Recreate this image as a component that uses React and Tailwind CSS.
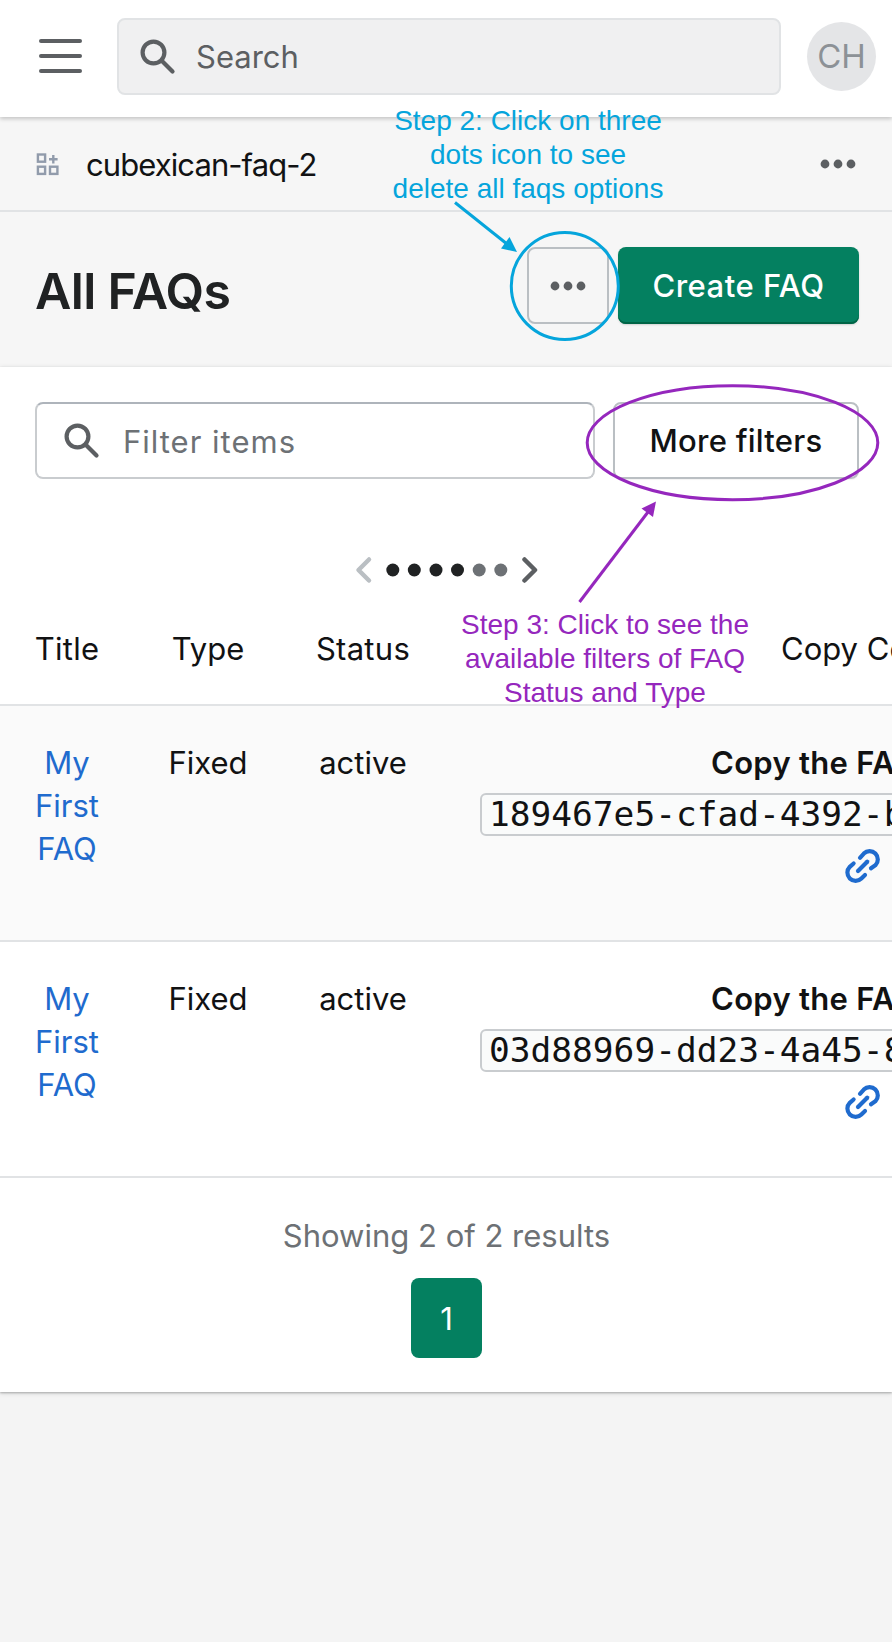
import React from "react";

function SearchIcon({ className }) {
  return (
    <svg width="36" height="36" viewBox="0 0 36 36" fill="none" stroke="#5c5f62" strokeWidth="4.2" className={className}>
      <circle cx="13.5" cy="13.5" r="10.9" />
      <path d="M21.5 21.5 32.5 32.5" strokeLinecap="round" />
    </svg>
  );
}

function Dots() {
  return (
    <svg width="36" height="10" viewBox="0 0 36 10" fill="#5c5f62">
      <circle cx="5" cy="5" r="4.4" />
      <circle cx="18" cy="5" r="4.4" />
      <circle cx="31" cy="5" r="4.4" />
    </svg>
  );
}

function LinkIcon() {
  return (
    <svg width="36" height="36" viewBox="0 0 36 36" fill="none" stroke="#1f6bce" strokeWidth="4.2" strokeLinecap="round">
      <path d="M15 9.800 18.800 5.600a8.200 8.200 0 0 1 11.600 11.600L26 20.300" />
      <path d="M8.600 15.500 4.800 18.800a8.200 8.200 0 0 0 11.600 11.600L20 27" />
      <path d="M13 23 22.200 13.800" />
    </svg>
  );
}

function AppGridIcon() {
  return (
    <svg width="24" height="24" viewBox="0 0 24 24" fill="none" stroke="#919bab" strokeWidth="2.4">
      <rect x="1.900" y="2.500" width="7.200" height="7.200" />
      <rect x="1.900" y="14.700" width="7.200" height="7.200" />
      <rect x="14" y="14.700" width="7.400" height="7.200" />
      <path d="M17.300 3v8.600M13 7.300h8.600" />
    </svg>
  );
}

const rows = [
  { code: "189467e5-cfad-4392-b", shade: "bg-[#fafafa]" },
  { code: "03d88969-dd23-4a45-8", shade: "bg-white" },
];

function Row({ code, shade }) {
  return (
    <div className={`grid h-[236px] grid-cols-[134px_148px_162px_1fr] border-b-2 border-[#e1e3e5] pt-[35px] text-center text-[31px] leading-[43px] ${shade}`}>
      <a className="px-[30px] text-[#1f6bce]">My First FAQ</a>
      <div>Fixed</div>
      <div>active</div>
      <div className="overflow-hidden text-left whitespace-nowrap">
        <div className="pl-[267px] font-semibold tracking-[0.3px]">Copy the FAQ</div>
        <div className="mt-[9px] ml-[36px] h-[43px] w-[460px] rounded-md border-2 border-[#c9cccf] bg-[#fafbfb] pl-[7px] font-['DejaVu_Sans_Mono',monospace] text-[34.500px] leading-[38px]">
          {code}
        </div>
        <div className="mt-[12px] ml-[401px]"><LinkIcon /></div>
      </div>
    </div>
  );
}

export default function App() {
  return (
    <div className="relative flex h-[1642px] w-[892px] flex-col overflow-hidden bg-[#f4f4f4] font-[Inter,sans-serif] text-[#111213]">
      <header className="z-10 flex h-[117px] shrink-0 items-start bg-white pt-[18px] shadow-[0_2px_4px_rgba(0,0,0,0.2)]">
        <div className="mt-[21px] ml-[39px] flex w-[43px] flex-col gap-[11px]">
          <span className="h-[4px] rounded-full bg-[#5c5f62]" />
          <span className="h-[4px] rounded-full bg-[#5c5f62]" />
          <span className="h-[4px] rounded-full bg-[#5c5f62]" />
        </div>
        <div className="ml-[35px] flex h-[77px] w-[664px] items-center rounded-lg border-2 border-[#e1e3e5] bg-[#f0f0f1] pl-[21px] text-[31px] text-[#5c5f62]">
          <SearchIcon />
          <span className="mt-[2px] ml-[20px]">Search</span>
        </div>
        <div className="mt-[4px] ml-[26px] flex size-[69px] items-center justify-center rounded-full bg-[#e4e5e7] pt-px text-[33px] text-[#8c9196]">CH</div>
      </header>

      <div className="flex h-[95px] shrink-0 items-center border-b-2 border-[#e1e3e5] bg-[#f6f6f6] pr-[36px] pl-[36px] text-[31px]">
        <AppGridIcon />
        <span className="mt-[3px] ml-[26px] tracking-[-0.92px]">cubexican-faq-2</span>
        <span className="ml-auto"><Dots /></span>
      </div>

      <div className="flex h-[155px] shrink-0 items-start bg-[#f6f6f6] pt-[35px] pr-[33px] pl-[35px]">
        <h1 className="mt-[12px] text-[50px] leading-[64px] font-semibold tracking-[-0.65px] text-[#202223]">All FAQs</h1>
        <div className="ml-auto flex gap-[9px]">
          <button className="flex h-[77px] w-[82px] items-center justify-center rounded-lg border-2 border-[#babfc3]"><Dots /></button>
          <button className="h-[77px] w-[241px] rounded-lg bg-[#048060] pt-[2px] text-[31px] font-medium tracking-[0.5px] text-white shadow-[inset_0_-2px_0_#006446,0_1px_2px_rgba(0,0,0,0.15)]">Create FAQ</button>
        </div>
      </div>

      <main className="flex h-[1025px] shrink-0 flex-col bg-white shadow-[0_1px_5px_rgba(23,24,24,0.15),0_1px_2px_rgba(0,0,0,0.25)]">
        <div className="flex gap-[18px] pt-[35px] pr-[33px] pl-[35px]">
          <div className="flex h-[77px] w-[560px] items-center rounded-lg border-2 border-[#c9cccf] border-t-[#aeb4bb] pl-[27px] text-[31px] text-[#6d7175]">
            <SearchIcon />
            <span className="mt-[3px] ml-[23px] tracking-[1px]">Filter items</span>
          </div>
          <button className="h-[77px] w-[246px] rounded-lg border-2 border-[#babfc3] pt-[2px] text-[31px] font-medium tracking-[0.25px] shadow-[0_1px_1px_rgba(0,0,0,0.05)]">More filters</button>
        </div>

        <div className="mt-[76px] flex h-[30px] items-center justify-center">
          <svg width="184" height="30" viewBox="0 0 184 30" fill="none" strokeWidth="4.500" strokeLinecap="round" strokeLinejoin="round">
            <path d="M15 4.500 4.500 15l10.500 10.500" stroke="#babfc3" />
            <g fill="#202223">
              <circle cx="38.800" cy="15" r="6.500" />
              <circle cx="60.300" cy="15" r="6.500" />
              <circle cx="82" cy="15" r="6.500" />
              <circle cx="103.500" cy="15" r="6.500" />
            </g>
            <g fill="#6d7175">
              <circle cx="125.200" cy="15" r="6.500" />
              <circle cx="146.800" cy="15" r="6.500" />
            </g>
            <path d="M170.500 4.500 181 15l-10.500 10.500" stroke="#5c5f62" />
          </svg>
        </div>

        <div className="grid h-[121px] grid-cols-[134px_148px_162px_1fr] border-b-2 border-[#e1e3e5] pt-[42px] text-center text-[31px] leading-[43px]">
          <div className="tracking-[0.3px]">Title</div>
          <div>Type</div>
          <div className="tracking-[0.3px]">Status</div>
          <div className="overflow-hidden pl-[337px] text-left whitespace-nowrap">Copy Code</div>
        </div>
        {rows.map((r) => <Row key={r.code} {...r} />)}

        <div className="mt-[36px] pl-px text-center text-[31px] leading-[43px] text-[#6d7175]">Showing 2 of 2 results</div>
        <div className="mt-[21px] flex justify-center pl-px">
          <button className="h-[80px] w-[71px] rounded-lg bg-[#048060] pt-[2px] text-[31px] text-white">1</button>
        </div>
      </main>

      <svg className="pointer-events-none absolute top-0 left-0 z-20" width="892" height="720" viewBox="0 0 892 720" fill="none">
        <g stroke="#05a5dc" strokeWidth="3">
          <circle cx="564.800" cy="286" r="53.500" />
          <path d="M455 202.500 507 244" />
        </g>
        <path d="M517 252 509.500 237 501 248.500z" fill="#05a5dc" />
        <g stroke="#9527bd" strokeWidth="3">
          <ellipse cx="732.500" cy="442.700" rx="145.300" ry="57" />
          <path d="M579.500 602 648 512" />
        </g>
        <path d="M656 501.500 641.500 508.500 653 517z" fill="#9527bd" />
      </svg>
      <div className="absolute top-[104px] left-[378px] z-20 w-[300px] text-center font-['Liberation_Sans',sans-serif] text-[28px] leading-[34px] whitespace-pre text-[#05a5dc]">
        {"Step 2: Click on three\ndots icon to see\ndelete all faqs options"}
      </div>
      <div className="absolute top-[608px] left-[455px] z-20 w-[300px] text-center font-['Liberation_Sans',sans-serif] text-[28px] leading-[34px] whitespace-pre text-[#9527bd]">
        {"Step 3: Click to see the\navailable filters of FAQ\nStatus and Type"}
      </div>
    </div>
  );
}
